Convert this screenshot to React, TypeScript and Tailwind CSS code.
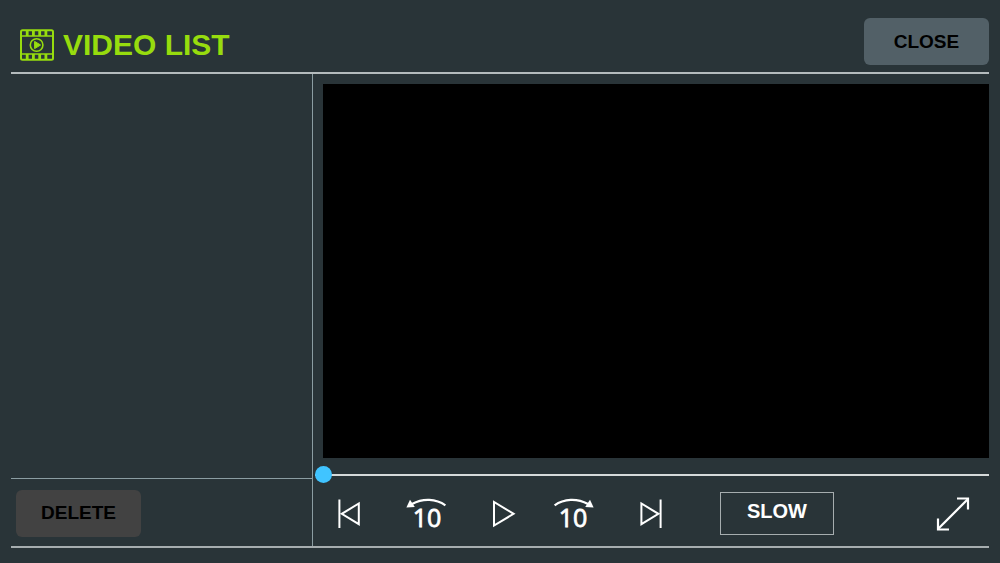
import { useState } from "react";

const bars = [7.2, 13.4, 19.7, 25.9];

function FilmIcon() {
  return (
    <svg width="34" height="32" viewBox="0 0 34 32" fill="none" stroke="#97dc0e" aria-hidden="true">
      <rect x="1" y="1.2" width="32" height="29.6" rx="1.5" strokeWidth="2" />
      <path d="M1 7h32M1 25h32" strokeWidth="1.6" />
      {bars.map((x) => (
        <path key={x} d={`M${x} 1.5v5.5M${x} 25v5.5`} strokeWidth="2.8" />
      ))}
      <circle cx="16.6" cy="16" r="6.3" strokeWidth="1.6" />
      <path d="M14.6 12.4v7.2l6-3.6z" fill="#97dc0e" strokeWidth="1" />
    </svg>
  );
}

function PrevIcon() {
  return (
    <svg width="40" height="40" viewBox="0 0 40 40" fill="none" stroke="white" strokeWidth="2" aria-hidden="true">
      <path d="M9.4 5.5V34" />
      <path d="M28.8 9.5v20.6L11.8 19.8z" />
    </svg>
  );
}

function NextIcon() {
  return (
    <svg width="40" height="40" viewBox="0 0 40 40" fill="none" stroke="white" strokeWidth="2" aria-hidden="true">
      <path d="M30.6 5.5V34" />
      <path d="M11.4 9.5v20.6L28.4 19.8z" />
    </svg>
  );
}

function PlayIcon() {
  return (
    <svg width="40" height="40" viewBox="0 0 40 40" fill="none" stroke="white" strokeWidth="2" aria-hidden="true">
      <path d="M14 8v23.6L33.6 19.8z" />
    </svg>
  );
}

function Back10Icon() {
  return (
    <svg width="40" height="40" viewBox="0 0 40 40" fill="none" className="overflow-visible" aria-hidden="true">
      <path d="M40.4 11.4C31 4.6 18 4 7 10" stroke="white" strokeWidth="2.2" />
      <path d="M1.4 13.4L5 5.8L9.8 13z" fill="white" />
      <text x="22" y="33" textAnchor="middle" fill="white" stroke="white" strokeWidth="0.8" className="font-['Open_Sans',sans-serif] text-[25px] font-normal">10</text>
    </svg>
  );
}

function Forward10Icon() {
  return (
    <svg width="40" height="40" viewBox="0 0 40 40" fill="none" className="overflow-visible" aria-hidden="true">
      <path d="M-0.4 11.4C9 4.6 22 4 33 10" stroke="white" strokeWidth="2.2" />
      <path d="M38.6 13.4L35 5.8L30.2 13z" fill="white" />
      <text x="18" y="33" textAnchor="middle" fill="white" stroke="white" strokeWidth="0.8" className="font-['Open_Sans',sans-serif] text-[25px] font-normal">10</text>
    </svg>
  );
}

function ExpandIcon() {
  return (
    <svg width="40" height="40" viewBox="0 0 40 40" fill="none" stroke="white" strokeWidth="2.2" aria-hidden="true">
      <path d="M5 35L35 5" />
      <path d="M24 4.5h11v11M5 24.5v11h11" />
    </svg>
  );
}

export default function App() {
  const [position, setPosition] = useState(0);

  return (
    <div className="flex min-h-screen flex-col bg-[#293438] px-[11px] pb-[15px] font-['Liberation_Sans',Arial,sans-serif] font-bold">
      <header className="flex items-start justify-between border-b-2 border-[#b4bbbd] pt-[18px] pb-[7px]">
        <div className="flex items-center gap-[9px] pt-[9px] pl-[9px]">
          <FilmIcon />
          <h1 className="text-[30px] leading-[36px] text-[#97dc0e]">VIDEO LIST</h1>
        </div>
        <button className="h-[47px] w-[125px] rounded-md bg-[#526067] pt-0.5 text-[19px] text-black">CLOSE</button>
      </header>

      <main className="flex flex-1 border-b-2 border-[#a6adaf]">
        <aside className="flex w-[302px] shrink-0 flex-col border-r border-[#8b9da2]">
          <ul className="flex-1" />
          <div className="border-t border-[#8b9da2] px-[5px] pt-[11px] pb-[9px]">
            <button className="h-[47px] w-[125px] rounded-md bg-[#424242] text-[19px] text-black">DELETE</button>
          </div>
        </aside>

        <section className="flex min-w-0 flex-1 flex-col pt-[10px] pl-[10px]">
          <div className="flex-1 bg-black" />
          <input
            type="range"
            aria-label="Position"
            min={0}
            max={100}
            value={position}
            onChange={(e) => setPosition(Number(e.target.value))}
            className="mt-2 -ml-2 h-[17px] appearance-none bg-transparent [&::-webkit-slider-runnable-track]:h-[2px] [&::-webkit-slider-runnable-track]:bg-[#d5dada] [&::-webkit-slider-thumb]:-mt-2 [&::-webkit-slider-thumb]:size-[17px] [&::-webkit-slider-thumb]:appearance-none [&::-webkit-slider-thumb]:rounded-full [&::-webkit-slider-thumb]:bg-[#40c4ff]"
          />
          <div className="flex h-[63px] items-center pr-4 pb-0.5 pl-[7px]">
            <div className="flex gap-[35px]">
              <button aria-label="Previous"><PrevIcon /></button>
              <button aria-label="Back 10 seconds"><Back10Icon /></button>
              <button aria-label="Play"><PlayIcon /></button>
              <button aria-label="Forward 10 seconds"><Forward10Icon /></button>
              <button aria-label="Next"><NextIcon /></button>
            </div>
            <button className="ml-[50px] h-[43px] w-[114px] border border-[#a6adaf] pb-1.5 text-[20px] text-white">SLOW</button>
            <button aria-label="Full screen" className="ml-auto"><ExpandIcon /></button>
          </div>
        </section>
      </main>
    </div>
  );
}
